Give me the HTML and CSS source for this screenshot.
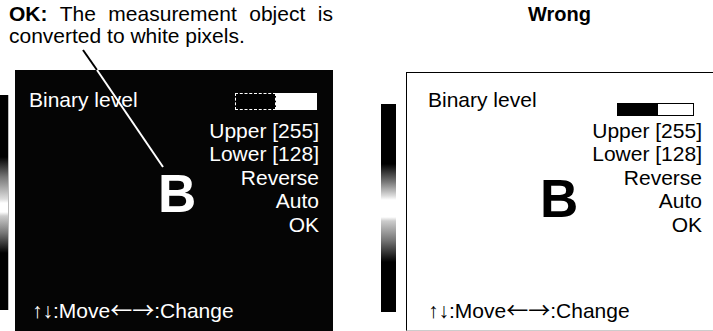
FILE: index.html
```html
<!DOCTYPE html>
<html>
    <head>
        <title>Binary level</title>
        <meta charset="UTF-8">
        <link rel="stylesheet" href="styles.css">
    </head>
    <body>
        <div class="page">
            <div class="col col_ok">
                <p class="caption"><b>OK:</b> The measurement object is converted to white pixels.</p>
                <div class="scene">
                    <div class="strip strip_ok"></div>
                    <div class="screen screen_ok">
                        <div class="screen_head">
                            <span>Binary level</span>
                            <span class="bar bar_ok"><i></i></span>
                        </div>
                        <div class="screen_body">
                            <span class="glyph">B</span>
                            <ul class="menu">
                                <li>Upper [255]</li>
                                <li>Lower [128]</li>
                                <li>Reverse</li>
                                <li>Auto</li>
                                <li>OK</li>
                            </ul>
                        </div>
                        <div class="screen_foot">↑↓:Move<span class="arw">←→</span>:Change</div>
                    </div>
                </div>
            </div>
            <div class="col col_wrong">
                <p class="title">Wrong</p>
                <div class="scene">
                    <div class="strip strip_wrong"></div>
                    <div class="screen screen_wrong">
                        <div class="screen_head">
                            <span>Binary level</span>
                            <span class="bar bar_wrong"><i></i></span>
                        </div>
                        <div class="screen_body">
                            <span class="glyph">B</span>
                            <ul class="menu">
                                <li>Upper [255]</li>
                                <li>Lower [128]</li>
                                <li>Reverse</li>
                                <li>Auto</li>
                                <li>OK</li>
                            </ul>
                        </div>
                        <div class="screen_foot">↑↓:Move<span class="arw">←→</span>:Change</div>
                    </div>
                </div>
            </div>
            <!-- leader line from the caption to the B -->
            <svg class="pointer" width="713" height="331" viewBox="0 0 713 331">
                <line x1="83" y1="50" x2="97" y2="70" stroke="#000" stroke-width="2"/>
                <line x1="97" y1="70" x2="163" y2="167" stroke="#fff" stroke-width="2"/>
            </svg>
        </div>
    </body>
</html>
```

FILE: styles.css
```css
body {
    margin: 0;
    background-color: white;
    font-family: "Liberation Sans", Arial, sans-serif;
    color: black;
}
.page {
    position: relative;
    display: flex;
    width: 713px;
    height: 331px;
    overflow: hidden;
}
.col_ok {
    width: 360px;
}
.col_wrong {
    flex: 1;
}
.caption {
    margin: 0;
    padding: 3px 0 0 9px;
    width: 324px;
    font-size: 21px;
    line-height: 22px;
    text-align: justify;
}
.title {
    margin: 0 0 0 46px;
    padding-top: 4px;
    font-size: 20px;
    line-height: 21px;
    font-weight: bold;
    text-align: center;
}
.scene {
    display: flex;
    align-items: flex-start;
}
.col_ok .scene {
    margin-top: 23px;
}
.col_wrong .scene {
    margin-top: 47px;
}
.strip {
    flex: none;
}
.strip_ok {
    width: 8px;
    height: 215px;
    margin-top: 25px;
    border-right: 1px solid #bbb;
    background: linear-gradient(to bottom, #000 0, #000 62px, #777 82px, #ddd 104px, #fff 108px, #fff 117px, #ccc 121px, #777 138px, #000 158px, #000 100%);
}
.strip_wrong {
    width: 15px;
    height: 208px;
    margin: 32px 10px 0 21px;
    background: linear-gradient(to bottom, #000 0, #000 60px, #777 78px, #ddd 92px, #fff 96px, #fff 113px, #ccc 117px, #777 136px, #000 158px, #000 100%);
}
.screen {
    display: flex;
    flex-direction: column;
    box-sizing: border-box;
    font-size: 21px;
    line-height: 23px;
}
.screen_ok {
    width: 318px;
    height: 261px;
    margin-left: 6px;
    padding: 18px 14px 0 14px;
    background-color: #050505;
    color: white;
}
.screen_wrong {
    flex: 1;
    height: 259px;
    padding: 15px 11px 0 21px;
    border-top: 1px solid black;
    border-left: 1px solid black;
    border-bottom: 1px solid #ccc;
}
.screen_head {
    display: flex;
    justify-content: space-between;
    height: 23px;
}
.bar {
    display: flex;
    box-sizing: border-box;
}
.bar i {
    display: block;
    box-sizing: border-box;
    height: 100%;
}
.bar_ok {
    width: 82px;
    height: 17px;
    margin: 5px 2px 0 0;
    background-color: white;
}
.bar_ok i {
    width: 41px;
    background-color: black;
    border: 1px dashed white;
}
.bar_wrong {
    width: 77px;
    height: 13px;
    margin: 15px 8px 0 0;
    border: 1px solid black;
    background-color: white;
}
.bar_wrong i {
    width: 40px;
    background-color: black;
}
.screen_body {
    display: flex;
    align-items: flex-start;
}
.glyph {
    font-size: 53px;
    line-height: 52px;
    font-weight: bold;
}
.screen_ok .glyph {
    margin: 57px 0 0 129px;
}
.screen_wrong .glyph {
    margin: 62px 0 0 112px;
}
.menu {
    list-style: none;
    margin: 8px 0 0 auto;
    padding: 0;
    text-align: right;
    line-height: 23.4px;
}
.screen_foot {
    margin-top: auto;
    padding: 0 0 9px 3px;
}
.screen_wrong .screen_foot {
    padding-bottom: 8px;
    padding-left: 0;
}
.arw {
    font-family: "Noto Sans CJK JP", sans-serif;
    font-size: 22px;
    line-height: 0;
}
.pointer {
    position: absolute;
    top: 0;
    left: 0;
}
```
